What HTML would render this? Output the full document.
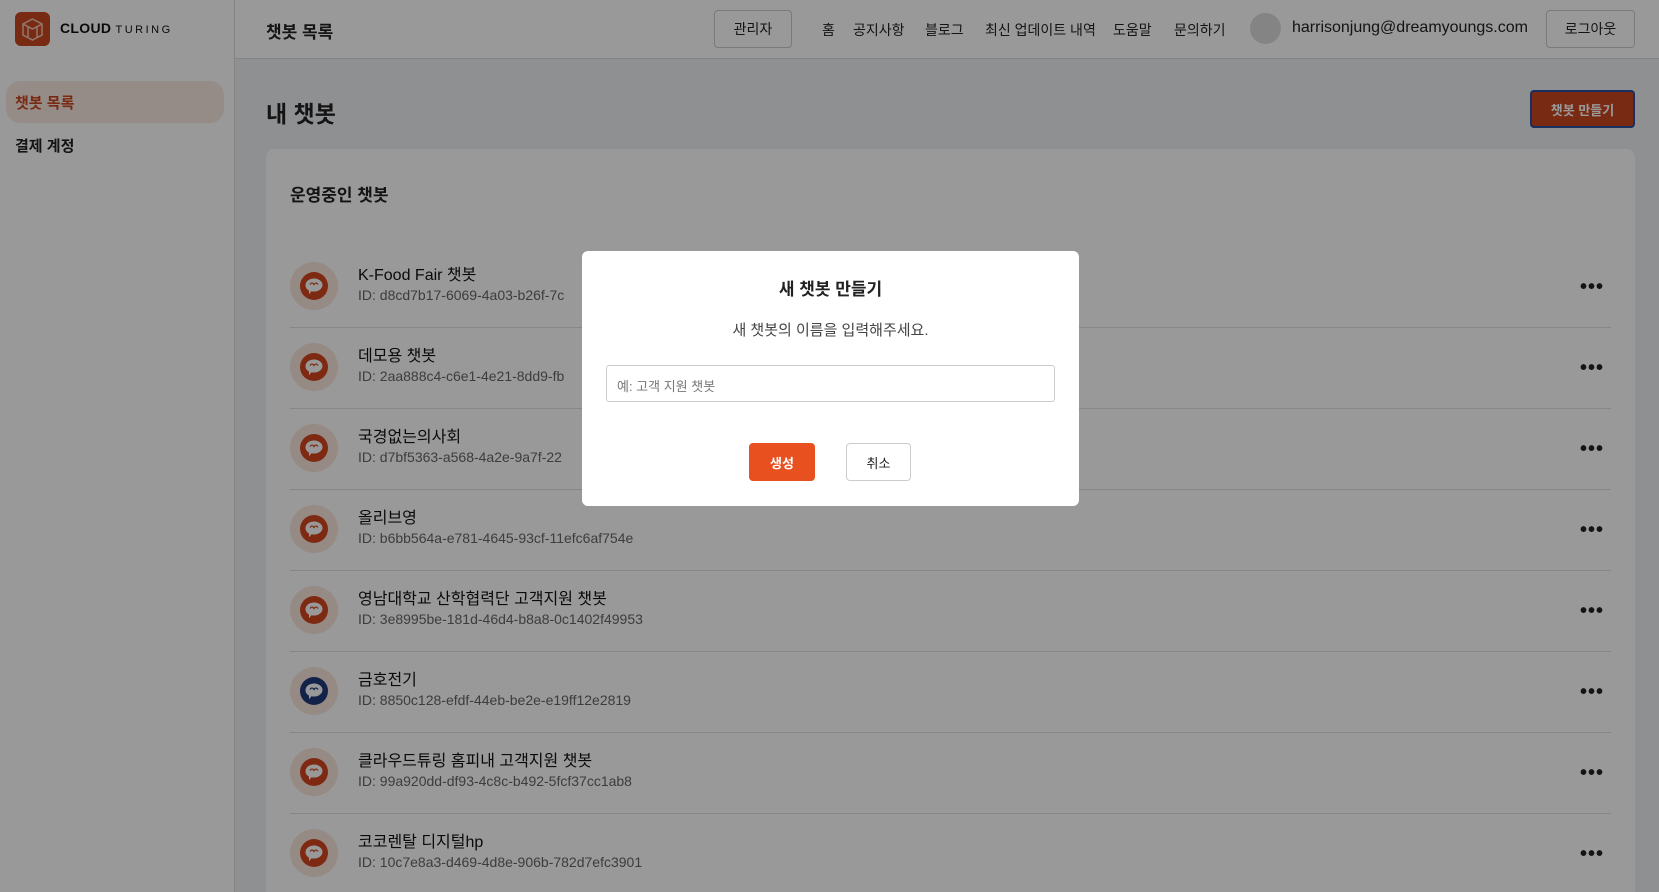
<!DOCTYPE html>
<html><head><meta charset="utf-8"><style>
*{box-sizing:border-box;margin:0;padding:0}
html{width:1659px;height:892px;overflow:hidden}
body{width:1659px;height:892px;overflow:hidden;font-family:"Liberation Sans","Noto Sans CJK KR",sans-serif;background:#eff0f2;position:relative;color:#222}
.side{position:absolute;left:0;top:0;width:235px;height:892px;background:#fff;border-right:1px solid #ddd}
.header{position:absolute;left:235px;top:0;right:0;height:59px;background:#fff;border-bottom:1px solid #ddd}
.logo{position:absolute;left:15px;top:12px;width:35px;height:34px;background:#c8461f;border-radius:6px}
.abs{position:absolute;white-space:nowrap}
.btn{position:absolute;border:1px solid #ccc;border-radius:4px;background:#fff;font-size:14px;display:flex;align-items:center;justify-content:center}
.card{position:absolute;left:266px;top:149px;width:1369px;height:743px;background:#fff;border-radius:8px 8px 0 0}
.row{position:absolute;left:290px;width:1321px;height:81px;border-bottom:1px solid #e2e2e2}
.av{position:absolute;left:0;top:15px;width:48px;height:48px;border-radius:50%;background:#fbe6dd}
.name{position:absolute;left:68px;top:14px;font-size:16px;color:#111}
.id{position:absolute;left:68px;top:40px;font-size:14px;color:#666}
.dots{position:absolute;left:1290px;top:29px;font-size:20px;font-weight:bold;letter-spacing:1px}
.overlay{position:fixed;left:0;top:0;width:1659px;height:892px;background:rgba(0,0,0,0.4)}
.modal{position:absolute;left:582px;top:251px;width:497px;height:255px;background:#fff;border-radius:6px}
</style></head><body>
<div class="side">
<div class="logo"><svg width="35" height="34" viewBox="0 0 35 34"><path d="M17.5 7 L27 12 L27 23 L17.5 28 L8 23 L8 12 Z M8 12 L17.5 17 L27 12 M13 14.5 V25 M22 14.5 V25" fill="none" stroke="#f3c9b8" stroke-width="1.5"/></svg></div>
<div class="abs" style="left:60px;top:20px;font-size:14px;font-weight:bold;color:#111;letter-spacing:0.3px">CLOUD <span style="font-weight:normal;font-size:11px;letter-spacing:2.5px">TURING</span></div>
<div class="abs" style="left:6px;top:81px;width:218px;height:42px;background:#fbe9e2;border-radius:14px"></div>
<div class="abs" style="left:15px;top:92px;font-size:15px;font-weight:bold;color:#c8461f">챗봇 목록</div>
<div class="abs" style="left:15px;top:135px;font-size:15px;font-weight:bold;color:#222">결제 계정</div>
</div>
<div class="header">
<div class="abs" style="left:31px;top:18px;font-size:17px;font-weight:bold">챗봇 목록</div>
<div class="btn" style="left:479px;top:10px;width:78px;height:38px">관리자</div>
<div class="abs" style="left:587px;top:20px;font-size:14px">홈</div>
<div class="abs" style="left:618px;top:20px;font-size:14px">공지사항</div>
<div class="abs" style="left:690px;top:20px;font-size:14px">블로그</div>
<div class="abs" style="left:750px;top:20px;font-size:14px">최신 업데이트 내역</div>
<div class="abs" style="left:878px;top:20px;font-size:14px">도움말</div>
<div class="abs" style="left:939px;top:20px;font-size:14px">문의하기</div>
<div class="abs" style="left:1015px;top:13px;width:31px;height:31px;border-radius:50%;background:#ddd"></div>
<div class="abs" style="left:1057px;top:19px;font-size:16px">harrisonjung@dreamyoungs.com</div>
<div class="btn" style="left:1311px;top:10px;width:89px;height:38px">로그아웃</div>
</div>
<div class="abs" style="left:266px;top:95px;font-size:23px;font-weight:bold">내 챗봇</div>
<div class="btn" style="left:1530px;top:90px;width:105px;height:38px;background:#c8461f;color:#fff;border:2px solid #2a4fa0;font-weight:bold;font-size:13px">챗봇 만들기</div>
<div class="card"><div class="abs" style="left:24px;top:32px;font-size:17px;font-weight:bold">운영중인 챗봇</div></div>
<div id="rows"></div>
<script>
var d=[["K-Food Fair 챗봇","d8cd7b17-6069-4a03-b26f-7c"],["데모용 챗봇","2aa888c4-c6e1-4e21-8dd9-fb"],["국경없는의사회","d7bf5363-a568-4a2e-9a7f-22"],["올리브영","b6bb564a-e781-4645-93cf-11efc6af754e"],["영남대학교 산학협력단 고객지원 챗봇","3e8995be-181d-46d4-b8a8-0c1402f49953"],["금호전기","8850c128-efdf-44eb-be2e-e19ff12e2819"],["클라우드튜링 홈피내 고객지원 챗봇","99a920dd-df93-4c8c-b492-5fcf37cc1ab8"],["코코렌탈 디지털hp","10c7e8a3-d469-4d8e-906b-782d7efc3901"]];
var h="";d.forEach(function(r,i){var c=i==5?"#1e3a78":"#d2471f";var last=i==7?';border-bottom:none':'';h+='<div class="row" style="top:'+(247+i*81)+'px'+last+'"><div class="av"><svg width="48" height="48"><circle cx="24" cy="24" r="14" fill="'+c+'"/><path d="M15.5 23 a8.5 6.5 0 1 1 6 6.2 l-2.5 3 v-3.6 a8.5 6.5 0 0 1 -3.5 -5.6z" fill="#fff"/><path d="M20 22.5 q2-3 4 0 q2-3 4 0" stroke="'+c+'" stroke-width="1.3" fill="none"/></svg></div><div class="name">'+r[0]+'</div><div class="id">ID: '+r[1]+'</div><div class="dots">•••</div></div>'});
document.getElementById("rows").innerHTML=h;
</script>
<div class="overlay"></div>
<div class="modal">
<div class="abs" style="left:0;width:497px;text-align:center;top:24px;font-size:17px;font-weight:bold">새 챗봇 만들기</div>
<div class="abs" style="left:0;width:497px;text-align:center;top:68px;font-size:15px;color:#444">새 챗봇의 이름을 입력해주세요.</div>
<div class="abs" style="left:24px;top:114px;width:449px;height:37px;border:1px solid #ccc;border-radius:3px;font-size:13px;color:#777;padding:10px 10px">예: 고객 지원 챗봇</div>
<div class="btn" style="left:167px;top:192px;width:66px;height:38px;background:#e8501f;border-color:#e8501f;color:#fff;font-weight:bold;font-size:13px">생성</div>
<div class="btn" style="left:264px;top:192px;width:65px;height:38px;font-size:13px">취소</div>
</div>
</body></html>
